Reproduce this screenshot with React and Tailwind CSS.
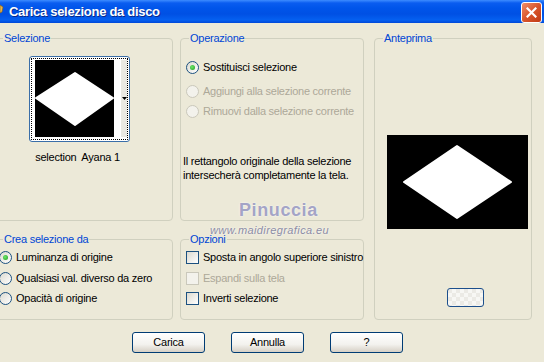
import React from "react";

const FONT = "font-['Liberation_Sans',Arial,sans-serif]";

function Radio({ checked, disabled }) {
  return (
    <span
      className={
        disabled
          ? "relative inline-block w-[13px] h-[13px] shrink-0 rounded-full border border-[#cac8bb] bg-[#f3f2ec]"
          : "relative inline-block w-[13px] h-[13px] shrink-0 rounded-full border border-[#1c5180] bg-[linear-gradient(135deg,#dcdad0,#ffffff)]"
      }
    >
      {checked && (
        <span className="absolute left-[3px] top-[3px] w-[5px] h-[5px] rounded-full bg-[radial-gradient(circle_at_40%_40%,#6ee86a,#1f9a1f)]" />
      )}
    </span>
  );
}

function Check({ disabled }) {
  return (
    <span
      className={
        disabled
          ? "inline-block w-[13px] h-[13px] shrink-0 border border-[#cac8bb] bg-[#f3f2ec]"
          : "inline-block w-[13px] h-[13px] shrink-0 border border-[#1c5180] bg-[linear-gradient(135deg,#dcdad0,#ffffff)]"
      }
    />
  );
}

function Row({ children, label, disabled, className }) {
  return (
    <div className={"flex items-center h-[13px] gap-[4px] " + className}>
      {children}
      <span className={disabled ? "text-[#aca899] whitespace-nowrap" : "text-black whitespace-nowrap"}>{label}</span>
    </div>
  );
}

function Diamond({ w, h, pts }) {
  return (
    <svg width={w} height={h} viewBox={`0 0 ${w} ${h}`} className="block">
      <rect width={w} height={h} fill="#000" />
      <polygon points={pts} fill="#fff" stroke="#fff" strokeWidth="2" strokeLinejoin="round" />
    </svg>
  );
}

function XPButton({ children, className }) {
  return (
    <div
      className={
        "flex items-center justify-center h-[21px] w-[73px] rounded-[3px] border border-[#003c74] bg-[linear-gradient(to_bottom,#ffffff,#f3f2ee_60%,#d6d0c5)] text-black " +
        (className || "")
      }
    >
      {children}
    </div>
  );
}

export default function App() {
  return (
    <div className={"relative w-[544px] h-[362px] overflow-hidden bg-[#ece9d8] text-[11px] leading-[13px] tracking-[-0.25px] " + FONT}>
      {/* Title bar */}
      <div className="relative flex items-center h-[23px] bg-[linear-gradient(to_bottom,#3d8cff_0px,#0a5df0_3px,#0055ea_8px,#0050e4_14px,#0560f0_20px,#0048d8_23px)]">
        <svg width="4" height="12" viewBox="0 0 4 12" className="absolute left-0 top-[4px]">
          <path d="M0 1 L3 3 L2 8 L0 9 Z" fill="#e7b64a" stroke="#8a5a10" strokeWidth="0.6" />
        </svg>
        <span className="ml-[9px] text-white font-bold text-[13px] tracking-[-0.3px] [text-shadow:1px_1px_0_#0a2a8a]">
          Carica selezione da disco
        </span>
        <div className="ml-auto mr-[2px] mt-[1px] w-[21px] h-[21px] rounded-[3px] border border-white bg-[linear-gradient(135deg,#f08e6a,#d9562c_50%,#c03a14)] flex items-center justify-center">
          <svg width="11" height="11" viewBox="0 0 11 11">
            <path d="M1.5 1.5 L9.5 9.5 M9.5 1.5 L1.5 9.5" stroke="#fff" strokeWidth="2.2" strokeLinecap="square" />
          </svg>
        </div>
      </div>

      {/* Groups */}
      <div className="ml-[-5px] mt-[9px] grid grid-cols-[178px_191px_168px] grid-rows-[189px_87px] gap-y-[12px]">
        {/* Selezione */}
        <fieldset className="border border-[#d0d0bf] rounded-[4px]">
          <legend className="ml-[7px] px-[1px] text-[#0046d5]">Selezione</legend>
          <div className="ml-[33px] mt-[11px] w-[101px] flex flex-col items-center">
            <div className="w-[101px] h-[86px] rounded-[3px] border border-[#3a6ea8] bg-white p-[1px]">
              <div className="h-full border border-dotted border-black flex pl-[3px] pt-[1px]">
                <Diamond w={79} h={77} pts="1,38 40,13 78,38 40,65" />
                <div className="relative w-[13px] h-[77px] bg-[linear-gradient(to_right,#ffffff_55%,#e9e8e2_55%)]">
                  <svg width="5" height="3" viewBox="0 0 5 3" className="absolute left-[8px] top-[37px]">
                    <path d="M0 0 H5 L2.5 3 Z" fill="#000" />
                  </svg>
                </div>
              </div>
            </div>
            <div className="mt-[9px] ml-[-4px] whitespace-pre text-black">selection  Ayana 1</div>
          </div>
        </fieldset>

        {/* Operazione */}
        <fieldset className="ml-[7px] border border-[#d0d0bf] rounded-[4px]">
          <legend className="ml-[8px] px-[1px] text-[#0046d5]">Operazione</legend>
          <div className="ml-[5px]">
            <Row label="Sostituisci selezione" className="mt-[16px]">
              <Radio checked />
            </Row>
            <Row label="Aggiungi alla selezione corrente" disabled className="mt-[11px]">
              <Radio disabled />
            </Row>
            <Row label="Rimuovi dalla selezione corrente" disabled className="mt-[7px]">
              <Radio disabled />
            </Row>
          </div>
          <p className="ml-[2px] mt-[36px] leading-[14px] text-black">
            Il rettangolo originale della selezione
            <br />
            intersecherà completamente la tela.
          </p>
        </fieldset>

        {/* Anteprima */}
        <fieldset className="ml-[10px] row-span-2 border border-[#d0d0bf] rounded-[4px] flex flex-col">
          <legend className="ml-[8px] px-[1px] text-[#0046d5]">Anteprima</legend>
          <div className="ml-[12px] mt-[90px]">
            <Diamond w={141} h={94} pts="17,47 70,11 124,47 70,83" />
          </div>
          <div className="ml-[72px] mt-[59px] w-[37px] h-[19px] rounded-[3px] border border-[#1c4f8c] bg-[repeating-conic-gradient(#f7f7f4_0%_25%,#ebeae5_0%_50%)] bg-[length:8px_8px]" />
        </fieldset>

        {/* Crea selezione da */}
        <fieldset className="border border-[#d0d0bf] rounded-[4px]">
          <legend className="ml-[7px] px-[1px] text-[#0046d5]">Crea selezione da</legend>
          <div className="ml-[3px]">
            <Row label="Luminanza di origine" className="mt-[5px]">
              <Radio checked />
            </Row>
            <Row label="Qualsiasi val. diverso da zero" className="mt-[8px]">
              <Radio />
            </Row>
            <Row label="Opacità di origine" className="mt-[7px]">
              <Radio />
            </Row>
          </div>
        </fieldset>

        {/* Opzioni */}
        <fieldset className="ml-[7px] border border-[#d0d0bf] rounded-[4px]">
          <legend className="ml-[8px] px-[1px] text-[#0046d5]">Opzioni</legend>
          <div className="ml-[5px]">
            <Row label="Sposta in angolo superiore sinistro" className="mt-[5px]">
              <Check />
            </Row>
            <Row label="Espandi sulla tela" disabled className="mt-[8px]">
              <Check disabled />
            </Row>
            <Row label="Inverti selezione" className="mt-[7px]">
              <Check />
            </Row>
          </div>
        </fieldset>
      </div>

      {/* Buttons */}
      <div className="flex ml-[132px] mt-[12px] gap-[26px]">
        <XPButton>Carica</XPButton>
        <XPButton>Annulla</XPButton>
        <XPButton>?</XPButton>
      </div>

      {/* Watermark */}
      <div className="absolute left-[239px] top-[200px] text-[18px] leading-[21px] font-bold tracking-[0.6px] text-[#a4a4c6] font-['Liberation_Sans',sans-serif] [text-shadow:0_0_2px_#ffffff]">
        Pinuccia
      </div>
      <div className="absolute left-[210px] top-[224px] text-[11px] leading-[13px] italic tracking-[0.4px] text-[#8c8ca4] font-['Liberation_Sans',sans-serif] [text-shadow:0_0_2px_#ffffff]">
        www.maidiregrafica.eu
      </div>
    </div>
  );
}
